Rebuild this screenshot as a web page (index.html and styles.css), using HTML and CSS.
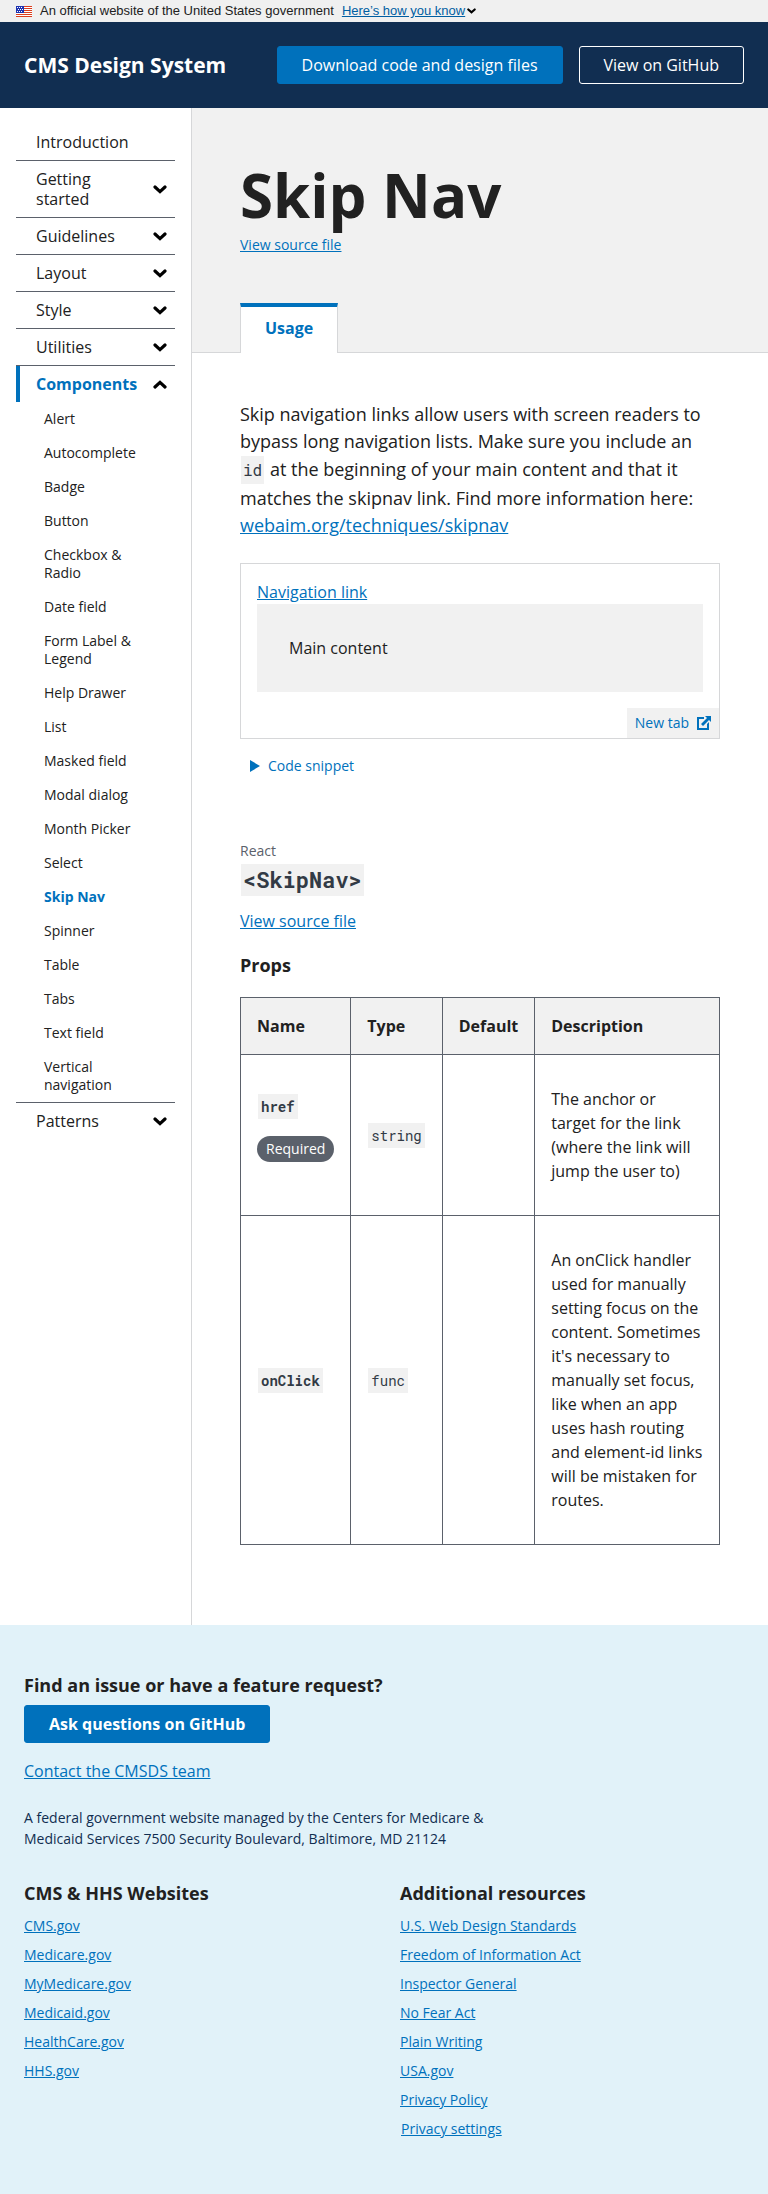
FILE: index.html
```html
<!DOCTYPE html>
<html lang="en">
<head>
<meta charset="utf-8">
<meta name="viewport" content="width=device-width, initial-scale=1">
<title>Skip Nav - CMS Design System</title>
<link rel="stylesheet" href="styles.css">
</head>
<body>
<svg class="sprite" aria-hidden="true">
  <symbol id="chevron" viewBox="0 0 14 9"><path d="M2 2l5 4.6L12 2" fill="none" stroke="currentColor" stroke-width="3.2" stroke-linecap="round"/></symbol>
</svg>
<div class="banner">
  <svg class="banner-flag" viewBox="0 0 16 11" aria-hidden="true">
    <path fill="#fff" d="M0 0h16v11H0z"/>
    <path fill="#db3e1f" d="M0 0h16v1H0zM0 2h16v1H0zM0 4h16v1H0zM0 6h16v1H0zM0 8h16v1H0zM0 10h16v1H0z"/>
    <path fill="#1e33b1" d="M0 0h8v7H0z"/>
    <path fill="#fff" d="M1 1h1v1H1zM3 1h1v1H3zM5 1h1v1H5zM2 3h1v1H2zM4 3h1v1H4zM6 3h1v1H6zM1 5h1v1H1zM3 5h1v1H3zM5 5h1v1H5z"/>
  </svg>
  <span>An official website of the United States government</span>
  <button class="banner-button" type="button"><span>Here’s how you know</span><svg class="banner-chevron" aria-hidden="true"><use href="#chevron"/></svg></button>
</div>
<header class="site-header">
  <span class="site-title">CMS Design System</span>
  <div class="header-actions">
    <a class="button button-primary" href="#">Download code and design files</a>
    <a class="button button-inverse" href="#">View on GitHub</a>
  </div>
</header>
<div class="layout">
  <nav class="sidebar" aria-label="Main">
    <ul class="nav">
      <li class="nav-item"><a class="nav-label" href="#">Introduction</a></li>
      <li class="nav-item"><button class="nav-label" type="button"><span>Getting started</span><svg class="chevron" aria-hidden="true"><use href="#chevron"/></svg></button></li>
      <li class="nav-item"><button class="nav-label" type="button"><span>Guidelines</span><svg class="chevron" aria-hidden="true"><use href="#chevron"/></svg></button></li>
      <li class="nav-item"><button class="nav-label" type="button"><span>Layout</span><svg class="chevron" aria-hidden="true"><use href="#chevron"/></svg></button></li>
      <li class="nav-item"><button class="nav-label" type="button"><span>Style</span><svg class="chevron" aria-hidden="true"><use href="#chevron"/></svg></button></li>
      <li class="nav-item"><button class="nav-label" type="button"><span>Utilities</span><svg class="chevron" aria-hidden="true"><use href="#chevron"/></svg></button></li>
      <li class="nav-item">
        <button class="nav-label nav-label-current" type="button" aria-expanded="true"><span>Components</span><svg class="chevron chevron-up" aria-hidden="true"><use href="#chevron"/></svg></button>
        <ul class="subnav">
          <li><a class="subnav-link" href="#">Alert</a></li>
          <li><a class="subnav-link" href="#">Autocomplete</a></li>
          <li><a class="subnav-link" href="#">Badge</a></li>
          <li><a class="subnav-link" href="#">Button</a></li>
          <li><a class="subnav-link" href="#">Checkbox &amp; Radio</a></li>
          <li><a class="subnav-link" href="#">Date field</a></li>
          <li><a class="subnav-link" href="#">Form Label &amp; Legend</a></li>
          <li><a class="subnav-link" href="#">Help Drawer</a></li>
          <li><a class="subnav-link" href="#">List</a></li>
          <li><a class="subnav-link" href="#">Masked field</a></li>
          <li><a class="subnav-link" href="#">Modal dialog</a></li>
          <li><a class="subnav-link" href="#">Month Picker</a></li>
          <li><a class="subnav-link" href="#">Select</a></li>
          <li><a class="subnav-link subnav-link-current" href="#" aria-current="page">Skip Nav</a></li>
          <li><a class="subnav-link" href="#">Spinner</a></li>
          <li><a class="subnav-link" href="#">Table</a></li>
          <li><a class="subnav-link" href="#">Tabs</a></li>
          <li><a class="subnav-link" href="#">Text field</a></li>
          <li><a class="subnav-link" href="#">Vertical navigation</a></li>
        </ul>
      </li>
      <li class="nav-item"><button class="nav-label" type="button"><span>Patterns</span><svg class="chevron" aria-hidden="true"><use href="#chevron"/></svg></button></li>
    </ul>
  </nav>
  <main class="main">
    <div class="page-header">
      <h1 class="page-title">Skip Nav</h1>
      <a class="source-link" href="#">View source file</a>
      <div class="tabs"><a class="tab" href="#" aria-current="true">Usage</a></div>
    </div>
    <div class="content">
      <p class="lead">Skip navigation links allow users with screen readers to bypass long navigation lists. Make sure you include an <code class="code code-lead">id</code> at the beginning of your main content and that it matches the skipnav link. Find more information here: <a href="#">webaim.org/techniques/skipnav</a></p>
      <div class="example">
        <div class="example-body">
          <a class="example-link" href="#">Navigation link</a>
          <div class="example-main">Main content</div>
        </div>
        <a class="new-tab" href="#">New tab
          <svg class="new-tab-icon" viewBox="0 0 14 14" aria-hidden="true"><path fill="currentColor" d="M0 1h7v2H2v9h8V8l2-2v8H0zM8 0h6v6l-2-2-6 6-2-2 6-6z"/></svg>
        </a>
      </div>
      <details class="snippet">
        <summary class="snippet-toggle"><svg class="snippet-icon" viewBox="0 0 10 12" aria-hidden="true"><path fill="currentColor" d="M0 0l10 6-10 6z"/></svg>Code snippet</summary>
        <pre class="snippet-code">&lt;a class="ds-c-skip-nav" href="#main"&gt;Navigation link&lt;/a&gt;</pre>
      </details>
      <section class="component">
        <p class="eyebrow">React</p>
        <h2 class="component-name"><code class="code code-title">&lt;SkipNav&gt;</code></h2>
        <a class="component-source" href="#">View source file</a>
        <h3 class="props-title">Props</h3>
        <table class="props">
          <thead>
            <tr><th scope="col">Name</th><th scope="col">Type</th><th scope="col">Default</th><th scope="col">Description</th></tr>
          </thead>
          <tbody>
            <tr>
              <td><div class="prop-required"><code class="code code-bold">href</code><span class="badge">Required</span></div></td>
              <td><code class="code">string</code></td>
              <td></td>
              <td><p class="prop-text">The anchor or target for the link (where the link will jump the user to)</p></td>
            </tr>
            <tr>
              <td><code class="code code-bold">onClick</code></td>
              <td><code class="code">func</code></td>
              <td></td>
              <td><p class="prop-text">An onClick handler used for manually setting focus on the content. Sometimes it's necessary to manually set focus, like when an app uses hash routing and element-id links will be mistaken for routes.</p></td>
            </tr>
          </tbody>
        </table>
      </section>
    </div>
  </main>
</div>
<footer class="footer">
  <h2 class="footer-title">Find an issue or have a feature request?</h2>
  <a class="button button-primary button-bold" href="#">Ask questions on GitHub</a>
  <a class="footer-contact" href="#">Contact the CMSDS team</a>
  <p class="footer-address">A federal government website managed by the Centers for Medicare &amp; Medicaid Services 7500 Security Boulevard, Baltimore, MD 21124</p>
  <div class="footer-columns">
    <div>
      <h2 class="footer-title">CMS &amp; HHS Websites</h2>
      <ul class="footer-links">
        <li><a href="#">CMS.gov</a></li>
        <li><a href="#">Medicare.gov</a></li>
        <li><a href="#">MyMedicare.gov</a></li>
        <li><a href="#">Medicaid.gov</a></li>
        <li><a href="#">HealthCare.gov</a></li>
        <li><a href="#">HHS.gov</a></li>
      </ul>
    </div>
    <div>
      <h2 class="footer-title">Additional resources</h2>
      <ul class="footer-links">
        <li><a href="#">U.S. Web Design Standards</a></li>
        <li><a href="#">Freedom of Information Act</a></li>
        <li><a href="#">Inspector General</a></li>
        <li><a href="#">No Fear Act</a></li>
        <li><a href="#">Plain Writing</a></li>
        <li><a href="#">USA.gov</a></li>
        <li><a href="#">Privacy Policy</a></li>
        <li><button class="privacy-button" type="button">Privacy settings</button></li>
      </ul>
    </div>
  </div>
</footer>
</body>
</html>
```
FILE: styles.css
```css
*, *::before, *::after { box-sizing: border-box; }

body {
  margin: 0;
  background: #fff;
  color: #212121;
  font-family: "Open Sans", "Noto Sans", sans-serif;
  font-size: 16px;
  line-height: 24px;
}

h1, h2, h3, p, ul { margin: 0; padding: 0; }
ul { list-style: none; }
a { color: #0071bc; }
button { font: inherit; color: inherit; background: none; border: 0; padding: 0; margin: 0; cursor: pointer; text-align: left; }
.sprite { display: none; }

.banner {
  display: flex;
  align-items: center;
  padding: 3px 16px;
  background: #f0f0f0;
  font-family: "Liberation Sans", Arial, sans-serif;
  font-size: 13px;
  line-height: 16px;
}
.banner-flag { width: 16px; height: 11px; margin-right: 8px; }
.banner-button { display: flex; align-items: center; gap: 2px; margin-left: 8px; }
.banner-button span { color: #005ea2; text-decoration: underline; }
.banner-chevron { width: 9px; height: 6px; color: #000; }

.site-header {
  display: flex;
  align-items: center;
  justify-content: space-between;
  padding: 24px;
  background: #112e51;
}
.site-title { color: #fff; font-size: 21px; font-weight: 700; }
.header-actions { display: flex; gap: 16px; }
.button {
  display: inline-block;
  padding: 8px 24px;
  border: 1px solid #0071bc;
  border-radius: 3px;
  line-height: 20px;
  color: #fff;
  text-decoration: none;
}
.button-primary { background: #0071bc; }
.button-inverse { border-color: #fff; }
.button-bold { font-weight: 700; }

.layout { display: flex; }
.sidebar { flex: 0 0 192px; padding: 16px; border-right: 1px solid #d6d7d9; }
.nav-item + .nav-item { border-top: 1px solid #5b616b; }
.nav-label {
  display: flex;
  align-items: center;
  justify-content: space-between;
  gap: 12px;
  width: 100%;
  padding: 8px 8px 8px 20px;
  line-height: 20px;
  color: #212121;
  text-decoration: none;
}
.nav-label-current { padding-left: 16px; border-left: 4px solid #0071bc; color: #0071bc; font-weight: 700; }
.chevron { flex: none; width: 14px; height: 9px; color: #000; }
.chevron-up { transform: rotate(180deg); }
.subnav-link {
  display: block;
  padding: 8px 20px 8px 28px;
  font-size: 14px;
  line-height: 18px;
  color: #212121;
  text-decoration: none;
}
.subnav-link-current { color: #0071bc; font-weight: 700; }

.main { flex: 1; min-width: 0; }
.page-header { padding: 48px 48px 0; background: #f1f1f1; border-bottom: 1px solid #d6d7d9; }
.page-title { font-size: 60px; line-height: 78px; }
.source-link { display: block; width: fit-content; font-size: 14px; line-height: 21px; }
.tabs { display: flex; margin: 48px 0 -1px; }
.tab {
  padding: 10px 24px 14px;
  border: 1px solid #d6d7d9;
  border-top: 4px solid #0071bc;
  border-bottom: 0;
  background: #fff;
  line-height: 22px;
  color: #0071bc;
  font-weight: 700;
  text-decoration: none;
}

.content { padding: 48px 48px 80px; }
.lead { font-size: 18px; line-height: 27px; }
.code {
  display: inline-block;
  margin: 1px;
  padding: 2px 3px;
  background: #f1f1f1;
  color: #323a45;
  font-family: "Roboto Mono", "DejaVu Sans Mono", "Liberation Mono", monospace;
  font-size: 14px;
  line-height: 21px;
}
.code-lead { padding: 2px; font-size: 16px; line-height: 24px; }
.code-title { padding: 2px; font-size: 22px; line-height: 28px; }
.code-bold { font-weight: 700; }

.example { display: flex; flex-direction: column; margin-top: 24px; border: 1px solid #d6d7d9; }
.example-body { padding: 16px; }
.example-link { display: block; width: fit-content; }
.example-main { padding: 32px; background: #f1f1f1; }
.new-tab {
  display: flex;
  align-items: center;
  gap: 8px;
  align-self: flex-end;
  padding: 4px 8px;
  background: #f1f1f1;
  font-size: 14px;
  line-height: 22px;
  text-decoration: none;
}
.new-tab-icon { width: 14px; height: 14px; }
.snippet { margin-top: 16px; color: #0071bc; font-size: 14px; line-height: 21px; }
.snippet-toggle { display: flex; align-items: center; gap: 8px; padding-left: 10px; cursor: pointer; list-style: none; }
.snippet-icon { width: 10px; height: 12px; }
.snippet-code { margin: 8px 0 0; padding: 16px; background: #f1f1f1; color: #323a45; white-space: pre-wrap; }

.component { margin-top: 64px; }
.eyebrow { margin-bottom: 2px; color: #5b616b; font-size: 14px; line-height: 21px; }
.component-name { display: flex; }
.component-source { display: block; width: fit-content; margin-top: 12px; }
.props-title { margin: 20px 0; font-size: 18px; line-height: 24px; }
.props { width: 100%; border-collapse: collapse; }
.props th, .props td { padding: 16px; border: 1px solid #5b616b; text-align: left; }
.props th { background: #f1f1f1; }
.prop-text { margin: 16px 0; }
.prop-required { display: flex; flex-direction: column; align-items: flex-start; gap: 16px; padding-bottom: 16px; }
.badge { padding: 2px 9px; border-radius: 13px; background: #5b616b; color: #fff; font-size: 14px; line-height: 22px; }

.footer { padding: 48px 24px 56px; background: #e1f2f9; }
.footer-title { margin-bottom: 8px; font-size: 18px; line-height: 24px; }
.footer-contact { display: block; width: fit-content; margin-top: 16px; }
.footer-address { max-width: 480px; margin: 24px 0 32px; color: #112e51; font-size: 14px; line-height: 21px; }
.footer-columns { display: grid; grid-template-columns: 1fr 1fr; gap: 32px; }
.footer-columns .footer-title { margin-bottom: 10px; }
.footer-links { display: grid; gap: 8px; font-size: 14px; line-height: 21px; }
.privacy-button { display: block; padding: 0 1px; color: #0071bc; text-decoration: underline; }
```
